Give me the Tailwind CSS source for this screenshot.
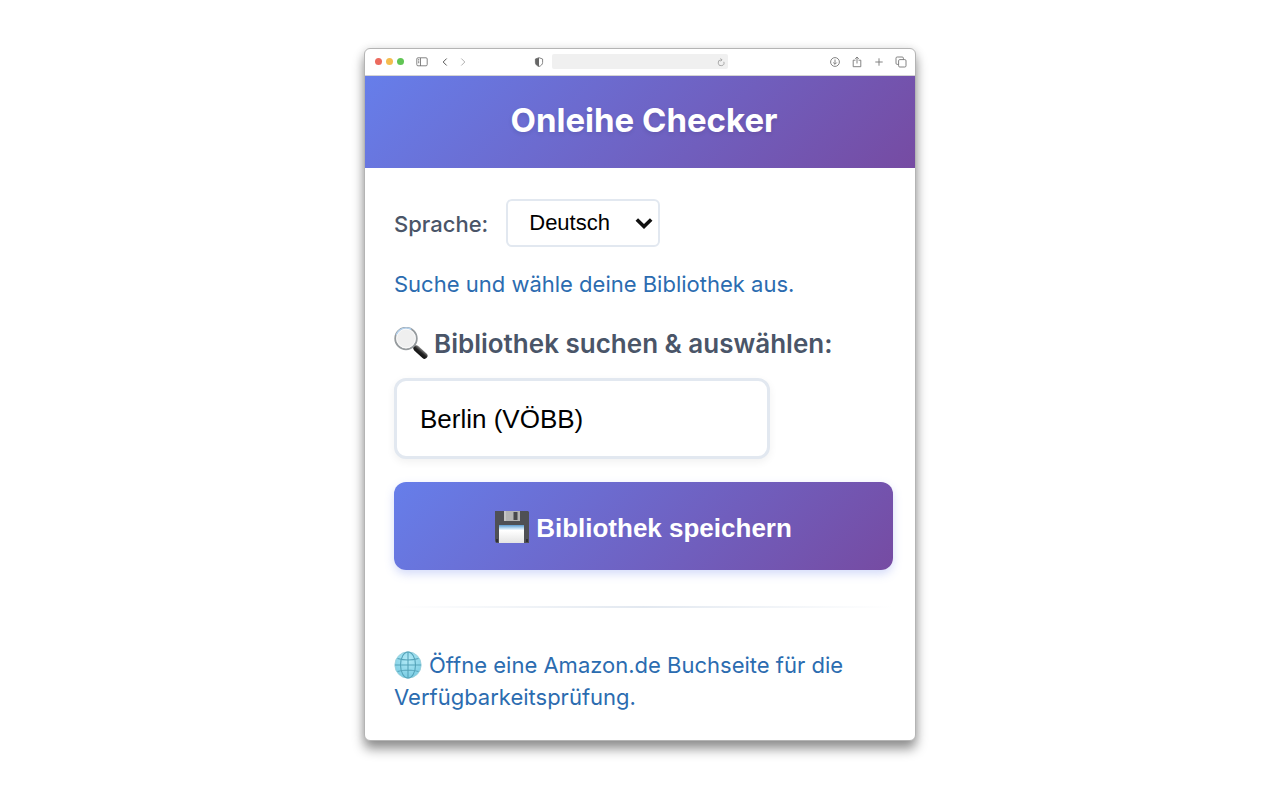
<!DOCTYPE html>
<html lang="de">
<head>
<meta charset="utf-8">
<meta name="viewport" content="width=device-width, initial-scale=1">
<title>Onleihe Checker</title>
<script src="https://cdn.jsdelivr.net/npm/@tailwindcss/browser@4"></script>
</head>
<body class="bg-white px-4 py-12 font-['Inter',sans-serif]">
<main class="mx-auto max-w-[552px] overflow-hidden rounded-md border border-[#b4b4b4] bg-white shadow-[0_8px_12px_rgba(0,0,0,0.42),0_0_10px_rgba(0,0,0,0.1)]">
  <div class="flex h-[27px] items-center border-b border-[#d4d4d4] pr-2 pb-px pl-[10px] text-[#777777]">
    <div class="flex gap-1">
      <span class="size-[7px] rounded-full bg-[#ec6a5e]"></span>
      <span class="size-[7px] rounded-full bg-[#f4bd4f]"></span>
      <span class="size-[7px] rounded-full bg-[#61c554]"></span>
    </div>
    <button type="button" aria-label="Seitenleiste" class="ml-3"><svg class="h-3 w-3" viewBox="0 0 12 12" fill="none" stroke="currentColor" stroke-width=".9"><rect x=".8" y="1.8" width="10.4" height="8" rx="1.2"/><path d="M4.5 2v8M2 3.7h1.3M2 5.2h1.3M2 6.7h1.3"/></svg></button>
    <button type="button" aria-label="Zurück" class="ml-3"><svg class="size-[10px]" viewBox="0 0 10 10" fill="none" stroke="#555" stroke-width="1"><path d="M6.7 1.5 3.2 5l3.5 3.5"/></svg></button>
    <button type="button" aria-label="Vorwärts" class="ml-2"><svg class="size-[10px]" viewBox="0 0 10 10" fill="none" stroke="#b0b0b0" stroke-width="1"><path d="M3.3 1.5 6.8 5 3.3 8.5"/></svg></button>
    <div class="flex flex-1 items-center justify-center gap-2 pr-9">
      <button type="button" aria-label="Datenschutz"><svg class="size-[10px]" viewBox="0 0 10 10"><path d="M5 .7 8.6 2v3.5C8.6 7.5 7 8.800 5 9.500 3 8.800 1.400 7.500 1.400 5.500V2Z" fill="none" stroke="#666" stroke-width=".8"/><path d="M5 .7v8.800C3 8.800 1.400 7.500 1.400 5.500V2Z" fill="#666"/></svg></button>
      <div class="flex h-[15px] w-44 items-center rounded-xs bg-[#f0f0f0] pr-[2px]">
        <input aria-label="Adresse" class="h-full min-w-0 flex-1 bg-transparent text-[9px] outline-none">
        <button type="button" aria-label="Neu laden"><svg class="size-[10px]" viewBox="0 0 10 10" fill="none" stroke="#999" stroke-width=".8"><path d="M7.800 4.800A2.900 2.900 0 1 1 5 2.900h.8M4.500 1.400 6 2.900 4.500 4.400"/></svg></button>
      </div>
    </div>
    <div class="flex gap-[10px]">
      <button type="button" aria-label="Downloads"><svg class="size-3" viewBox="0 0 12 12" fill="none" stroke="currentColor" stroke-width=".9"><circle cx="6" cy="6" r="4.400"/><path d="M6 3.500v4.700M4.200 6.500 6 8.300l1.800-1.800"/></svg></button>
      <button type="button" aria-label="Teilen"><svg class="size-3" viewBox="0 0 12 12" fill="none" stroke="currentColor" stroke-width=".9"><path d="M4.500 4.200H2.200v6.500h7.600V4.200H7.500M6 7.500V1M4.200 2.800 6 1l1.800 1.800"/></svg></button>
      <button type="button" aria-label="Neuer Tab"><svg class="size-3" viewBox="0 0 12 12" fill="none" stroke="currentColor" stroke-width=".9"><path d="M6 2.300v7.400M2.300 6h7.400"/></svg></button>
      <button type="button" aria-label="Tabübersicht"><svg class="size-3" viewBox="0 0 12 12" fill="none" stroke="currentColor" stroke-width=".9"><rect x="3.600" y="3.600" width="7.400" height="7.400" rx="1.200"/><path d="M3.600 8.400H2.200A1.200 1.200 0 0 1 1 7.200v-5A1.200 1.200 0 0 1 2.200 1h5a1.200 1.200 0 0 1 1.200 1.200v1.400"/></svg></button>
    </div>
  </div>
  <header class="bg-[linear-gradient(135deg,#667eea_0%,#764ba2_100%)] pt-6 pr-5 pb-7 pl-7 text-center">
    <h1 class="text-[33px] leading-10 font-bold text-white [text-shadow:0_2px_4px_rgba(0,0,0,0.1)]">Onleihe Checker</h1>
  </header>
  <form class="pt-[31px] pr-[22px] pb-[27px] pl-[29px]">
    <div class="flex items-center gap-[18px]">
      <label for="language" class="pt-[2px] text-[22px] leading-8 font-medium text-[#4a5568]">Sprache:</label>
      <div class="relative">
        <select id="language" class="block h-12 w-[154px] appearance-none rounded-md border-2 border-[#e2e8f0] bg-white pb-[2px] pl-[21px] font-['Liberation_Sans',sans-serif] text-[22px] text-black"><option>Deutsch</option></select>
        <svg class="pointer-events-none absolute top-[18px] right-[7px] h-3 w-[18px]" viewBox="0 0 18 12" fill="none" stroke="#111" stroke-width="3.600"><path d="m1.800 2.500 7.200 7 7.200-7"/></svg>
      </div>
    </div>
    <p class="mt-[21px] text-[22px] leading-8 text-[#2b6cb0]">Suche und wähle deine Bibliothek aus.</p>
    <label for="library" class="mt-[26px] flex items-center gap-[6px] text-[26px] leading-9 font-semibold text-[#4a5568]">
      <svg class="size-[34px] shrink-0" viewBox="0 0 34 34"><defs><linearGradient id="handle" gradientUnits="userSpaceOnUse" x1="24" y1="29" x2="29" y2="23"><stop offset="0" stop-color="#0c0c0c"/><stop offset=".6" stop-color="#222"/><stop offset="1" stop-color="#888"/></linearGradient></defs><path d="m19.500 19 4 3.500" stroke="#777" stroke-width="3"/><path d="m22.500 21.500 8 7.300" stroke="url(#handle)" stroke-width="6" stroke-linecap="round"/><circle cx="12" cy="11.500" r="10.800" fill="#efefef" stroke="#969b9e" stroke-width="1.800"/><path d="M2.300 8a10.500 10.500 0 0 1 15-5.500" fill="none" stroke="#b5d2ee" stroke-width="1.500"/><circle cx="12" cy="11.500" r="9.300" fill="none" stroke="#fafafa"/></svg>
      <span>Bibliothek suchen &amp; auswählen:</span>
    </label>
    <input id="library" value="Berlin (VÖBB)" class="mt-4 block h-[81px] w-[376px] max-w-full rounded-xl border-[3px] border-[#e2e8f0] bg-white px-[23px] pt-[2px] font-['Liberation_Sans',sans-serif] text-[26px] text-black shadow-[0_3px_8px_rgba(0,0,0,0.06)] outline-none">
    <button type="button" class="mt-[23px] flex h-[88px] w-full items-center justify-center gap-[7px] rounded-xl bg-[linear-gradient(135deg,#667eea_0%,#764ba2_100%)] pt-[2px] font-['Liberation_Sans',sans-serif] text-[26px] font-bold text-white shadow-[0_4px_10px_rgba(102,126,234,0.28)]">
      <svg class="size-[34px]" viewBox="0 0 34 34"><defs><linearGradient id="paper" x1="0" y1="0" x2="0" y2="1"><stop offset="0" stop-color="#5c9bd0"/><stop offset=".18" stop-color="#bedcf2"/><stop offset=".3" stop-color="#fff"/><stop offset="1" stop-color="#e4e4e4"/></linearGradient></defs><path d="M0 1h33l1 1v31H1l-1-2Z" fill="#4f5055"/><path d="M9 1h16v10H9Z" fill="#b4b4b4"/><path d="M18.500 2h4v8h-4Z" fill="#47484c"/><path d="M10 1v10" stroke="#d5d5d5"/><path d="M4 15h25v18H4Z" fill="url(#paper)"/><path d="M1 29h2v3H1Zm30 0h2v3h-2Z" fill="#303136"/></svg>
      <span class="pt-[3px]">Bibliothek speichern</span>
    </button>
    <hr class="mt-9 h-[2px] border-0 bg-[linear-gradient(90deg,transparent,#e2e8f0,transparent)]">
    <p class="mt-[41px] text-[22px] leading-8 text-[#2b6cb0]"><svg class="mr-[7px] inline-block size-7 align-[-6px]" viewBox="0 0 28 28"><defs><radialGradient id="ocean" cx=".5" cy=".3" r=".7"><stop offset="0" stop-color="#b4ebf7"/><stop offset="1" stop-color="#79cbe2"/></radialGradient></defs><circle cx="14" cy="14" r="13.200" fill="url(#ocean)" stroke="#9ccfdb" stroke-width=".8"/><g fill="none" stroke="#55a3b9" stroke-width="1.100"><path d="M14 1v26M1 14h26M3.500 7.500q10.500 3 21 0M3.500 20.500q10.500-3 21 0"/><ellipse cx="14" cy="14" rx="7.500" ry="13"/></g></svg>Öffne eine Amazon.de Buchseite für die Verfügbarkeitsprüfung.</p>
  </form>
</main>
</body>
</html>
